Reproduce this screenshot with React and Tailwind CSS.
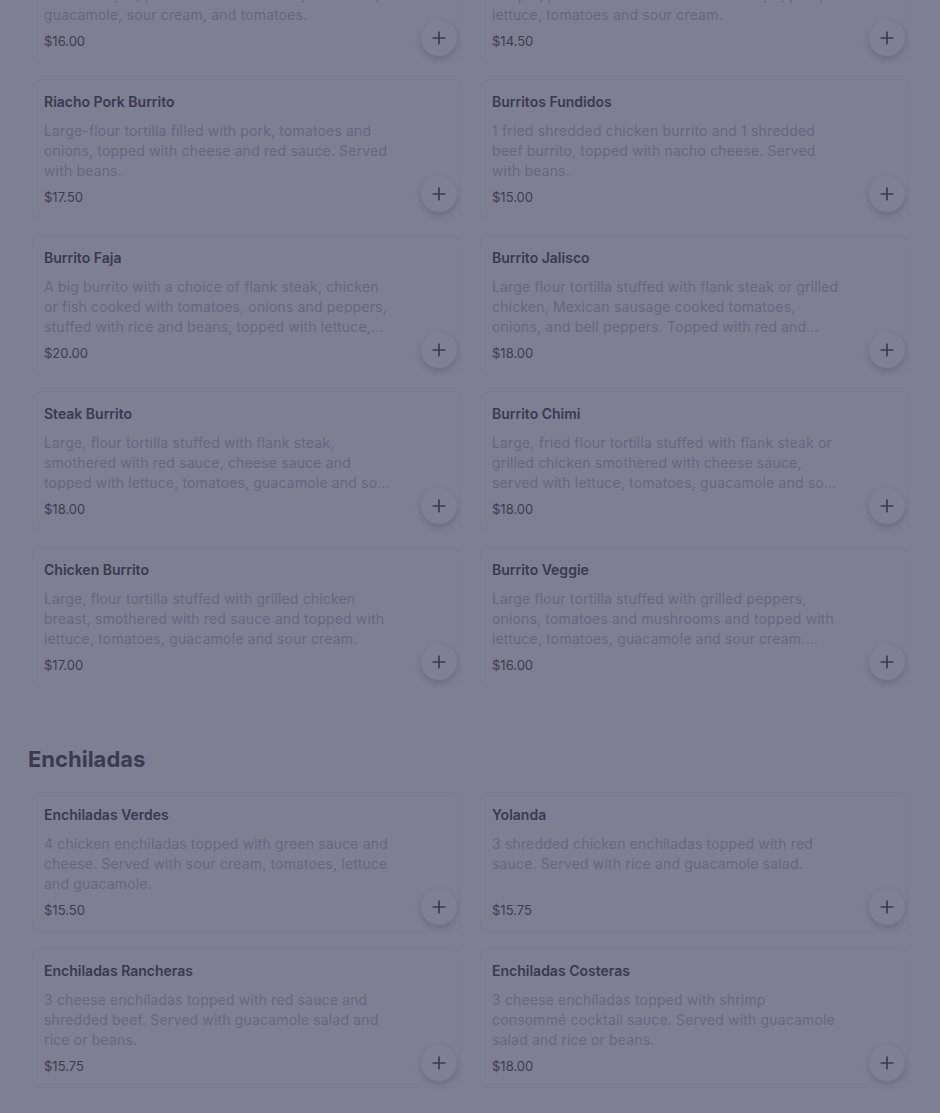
import React from 'react';
import { Plus } from 'lucide-react';

const burritos = [
    {
        name: 'Burrito Supreme',
        desc: 'Large flour tortilla stuffed with your choice of meat and beans, topped with cheese sauce, red sauce, guacamole, sour cream, and tomatoes.',
        price: '$16.00',
    },
    {
        name: 'Burrito California',
        desc: 'Large flour tortilla stuffed with grilled chicken and rice, topped with cheese sauce and red peppers, lettuce, tomatoes and sour cream.',
        price: '$14.50',
    },
    {
        name: 'Riacho Pork Burrito',
        desc: 'Large-flour tortilla filled with pork, tomatoes and onions, topped with cheese and red sauce. Served with beans.',
        price: '$17.50',
    },
    {
        name: 'Burritos Fundidos',
        desc: '1 fried shredded chicken burrito and 1 shredded beef burrito, topped with nacho cheese. Served with beans.',
        price: '$15.00',
    },
    {
        name: 'Burrito Faja',
        desc: 'A big burrito with a choice of flank steak, chicken or fish cooked with tomatoes, onions and peppers, stuffed with rice and beans, topped with lettuce, tomatoes, guacamole and sour cream.',
        price: '$20.00',
    },
    {
        name: 'Burrito Jalisco',
        desc: 'Large flour tortilla stuffed with flank steak or grilled chicken, Mexican sausage cooked tomatoes, onions, and bell peppers. Topped with red and cheese sauce.',
        price: '$18.00',
    },
    {
        name: 'Steak Burrito',
        desc: 'Large, flour tortilla stuffed with flank steak, smothered with red sauce, cheese sauce and topped with lettuce, tomatoes, guacamole and sour cream.',
        price: '$18.00',
    },
    {
        name: 'Burrito Chimi',
        desc: 'Large, fried flour tortilla stuffed with flank steak or grilled chicken smothered with cheese sauce, served with lettuce, tomatoes, guacamole and sour cream.',
        price: '$18.00',
    },
    {
        name: 'Chicken Burrito',
        desc: 'Large, flour tortilla stuffed with grilled chicken breast, smothered with red sauce and topped with lettuce, tomatoes, guacamole and sour cream.',
        price: '$17.00',
    },
    {
        name: 'Burrito Veggie',
        desc: 'Large flour tortilla stuffed with grilled peppers, onions, tomatoes and mushrooms and topped with lettuce, tomatoes, guacamole and sour cream. Served with rice and beans.',
        price: '$16.00',
    },
];

const enchiladas = [
    {
        name: 'Enchiladas Verdes',
        desc: '4 chicken enchiladas topped with green sauce and cheese. Served with sour cream, tomatoes, lettuce and guacamole.',
        price: '$15.50',
    },
    {
        name: 'Yolanda',
        desc: '3 shredded chicken enchiladas topped with red sauce. Served with rice and guacamole salad.',
        price: '$15.75',
    },
    {
        name: 'Enchiladas Rancheras',
        desc: '3 cheese enchiladas topped with red sauce and shredded beef. Served with guacamole salad and rice or beans.',
        price: '$15.75',
    },
    {
        name: 'Enchiladas Costeras',
        desc: '3 cheese enchiladas topped with shrimp consommé cocktail sauce. Served with guacamole salad and rice or beans.',
        price: '$18.00',
    },
];

function ItemCard({ item }) {
    return (
        <div className="relative h-[140px] flex flex-col rounded-lg border border-[#7b7c90] px-[11px] pt-3 pb-3">
            <h3 className="text-[14px] leading-5 font-semibold text-[#393a4e]">{item.name}</h3>
            <p className="mt-[9px] w-[352px] text-[14px] leading-5 tracking-[0.16px] text-[#66677b] line-clamp-3">{item.desc}</p>
            <span className="mt-auto translate-y-[1px] text-[13px] leading-5 text-[#3c3d50]">{item.price}</span>

            {/* add button */}
            <button className="absolute right-[2px] bottom-[6px] w-9 h-9 rounded-full bg-[#7f8094] flex items-center justify-center text-[#393a4d] shadow-[0_3px_6px_rgba(40,40,60,0.22)]">
                <Plus size={20} strokeWidth={2} />
            </button>
        </div>
    );
}

export default function App() {
    return (
        <div className="min-h-[1113px] bg-[#7e7f93] overflow-hidden font-['Inter',sans-serif]">
            <div className="-mt-[77px] px-8">
                {/* Burritos */}
                <div className="grid grid-cols-2 gap-x-5 gap-y-4">
                    {burritos.map((item) => (
                        <ItemCard key={item.name} item={item} />
                    ))}
                </div>

                {/* Enchiladas */}
                <h2 className="mt-[58px] -ml-1 text-[22px] leading-7 font-bold text-[#3a3b4f]">Enchiladas</h2>
                <div className="mt-[19px] grid grid-cols-2 gap-x-5 gap-y-4 pb-10">
                    {enchiladas.map((item) => (
                        <ItemCard key={item.name} item={item} />
                    ))}
                </div>
            </div>
        </div>
    );
}
